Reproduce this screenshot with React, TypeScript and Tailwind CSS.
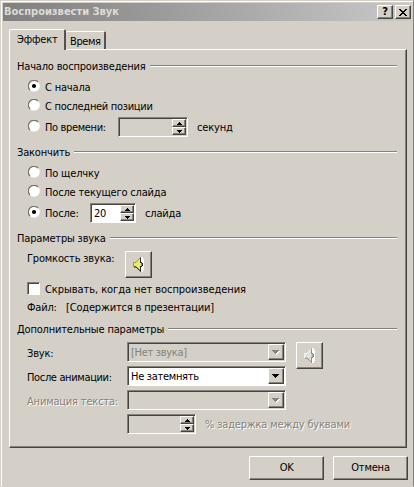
import type { ReactNode } from 'react';
import clsx from 'clsx';

const raised = 'border border-t-white border-l-white border-r-[#45443f] border-b-[#45443f] bg-[#d4d0c8] shadow-[inset_-1px_-1px_0_#85827b]';
const sunken = 'border border-t-[#85827b] border-l-[#85827b] border-r-white border-b-white shadow-[inset_1px_1px_0_#45443f]';
const disabledText = 'text-[#85827b] [text-shadow:1px_1px_0_#fff]';

function Section({ title, className, children }: { title: string; className?: string; children: ReactNode }) {
    return (
        <section className={className}>
            <div className="flex h-4 items-center gap-1">
                <h2 className="shrink-0 pt-0.5">{title}</h2>
                <div className="h-0.5 grow border-t border-t-[#85827b] bg-white" />
            </div>
            {children}
        </section>
    );
}

function Radio({ label, checked, spacing }: { label: string; checked?: boolean; spacing?: string }) {
    return (
        <label className="flex h-4 items-center gap-[5px]">
            <svg width="12" height="12" viewBox="0 0 12 12" className="mb-0.5 shrink-0">
                <circle cx="6" cy="6" r="5.8" fill="#fff" />
                <path d="M2 10A5.6 5.6 0 0 1 10 2" fill="none" stroke="#77746e" strokeWidth="1.3" />
                {checked && <circle cx="6" cy="6" r="2.1" fill="#000" />}
            </svg>
            <span className={clsx('pt-px', spacing)}>{label}</span>
        </label>
    );
}

function Arrow({ disabled }: { disabled?: boolean }) {
    return (
        <svg width="8" height="5" viewBox="0 0 8 5" shapeRendering="crispEdges">
            {disabled && <path d="M1 1h7L4.5 5z" fill="#fff" />}
            <path d="M0 0h7L3.5 4z" fill={disabled ? '#85827b' : '#000'} />
        </svg>
    );
}

function SpinButton({ up }: { up?: boolean }) {
    return (
        <div className={clsx('flex h-2 items-center justify-center', raised)}>
            <svg width="5" height="3" viewBox="0 0 5 3" shapeRendering="crispEdges">
                <path d={up ? 'M2 0h1v1h1v1h1v1H0V2h1V1h1z' : 'M0 0h5v1H4v1H3v1H2V2H1V1H0z'} />
            </svg>
        </div>
    );
}

function Spinner({ value, className }: { value?: string; className: string }) {
    return (
        <div className={clsx('flex h-5 p-px', sunken, value && 'bg-white', className)}>
            <span className="grow pl-[2px] leading-[17px]">{value}</span>
            <div className="flex w-[14px] flex-col">
                <SpinButton up />
                <SpinButton />
            </div>
        </div>
    );
}

function Select({ value, disabled }: { value?: string; disabled?: boolean }) {
    return (
        <div className={clsx('flex h-5 w-[159px] p-px', sunken, !disabled && 'bg-white')}>
            <span className={clsx('grow pl-0.5 leading-[17px] tracking-[-0.3px]', disabled && 'text-[#85827b]')}>{value}</span>
            <div className={clsx('flex w-4 items-center justify-center', raised)}>
                <Arrow disabled={disabled} />
            </div>
        </div>
    );
}

function SoundButton({ disabled }: { disabled?: boolean }) {
    const line = disabled ? '#85827b' : '#222';
    return (
        <button className={clsx('flex size-[27px] items-center justify-center', raised)}>
            <svg width="14" height="17" viewBox="0 0 14 17">
                <path d="M8.5 1h2l1.5 3v9l-1.5 3h-2z" fill="#fff" />
                <path d="M1.5 6.5H4l4.5-5v14l-4.5-5H1.5z" fill={disabled ? '#e4e2dc' : '#eeea62'} stroke={disabled ? '#fff' : '#8a8738'} strokeWidth="0.8" />
                <path d="M2 11h2l5 4.5" fill="none" stroke={line} />
                <path d="M8.5 1.5v14" fill="none" stroke={line} strokeWidth="0.9" />
                <path d="M8.5 6h1.5v1h1v3h-1v1H8.5z" fill={line} />
                <path d="M8 7h1.5v3H8z" fill={disabled ? '#d4d0c8' : '#eeea62'} />
            </svg>
        </button>
    );
}

export default function App() {
    return (
        <div className="flex h-[487px] w-[414px] flex-col border border-[#d4d0c8] border-r-[#85827b] bg-[#d4d0c8] font-['DejaVu_Sans_Condensed','DejaVu_Sans',sans-serif] text-[11px] leading-4 tracking-[-0.18px] whitespace-nowrap text-black shadow-[inset_1px_1px_0_#fff]">
            <header className="mt-0.5 ml-0.5 flex h-[18px] w-[408px] items-center bg-linear-to-r from-[#808080] to-[#c8c8c8] pl-px">
                <h1 className="grow font-bold tracking-[0px] text-[#dedbd4]">Воспроизвести Звук</h1>
                <div className="flex gap-0.5">
                    <button className={clsx('flex h-[14px] w-4 items-center justify-center text-[11px] font-bold', raised)}>?</button>
                    <button className={clsx('flex h-[14px] w-4 items-center justify-center', raised)}>
                        <svg width="8" height="7" viewBox="0 0 8 7" shapeRendering="crispEdges">
                            <path d="M0 0h2v1h1v1h2V1h1V0h2v1H7v1H6v1H5v1h1v1h1v1h1v1H6V6H5V5H3v1H2v1H0V6h1V5h1V4h1V3H2V2H1V1H0z" />
                        </svg>
                    </button>
                </div>
            </header>

            <nav className="mt-2 ml-2 flex h-5 items-end">
                <div className="z-10 -mb-px h-[21px] w-[57px] rounded-t-xs border-t border-r-2 border-l border-t-white border-r-[#55534e] border-l-white bg-[#d4d0c8] pl-[7px] leading-[19px]">Эффект</div>
                <div className="h-[18px] w-[40px] rounded-t-xs border-t border-r-2 border-t-white border-r-[#55534e] pl-1 leading-[19px] tracking-[-0.4px]">Время</div>
            </nav>

            <main className="ml-2 h-[399px] w-[398px] border border-t-white border-l-white border-r-[#45443f] border-b-[#45443f] pt-2 pr-[9px] pl-[7px] shadow-[inset_-1px_-1px_0_#85827b]">
                <Section title="Начало воспроизведения" className="h-[86px]">
                    <div className="flex flex-col pt-[5px] pl-[11px]">
                        <div className="h-[19px]"><Radio label="С начала" checked /></div>
                        <div className="h-[19px]"><Radio label="С последней позиции" spacing="tracking-[-0.3px]" /></div>
                        <div className="flex h-5 items-center">
                            <div className="w-[90px]"><Radio label="По времени:" spacing="tracking-[-0.35px]" /></div>
                            <Spinner className="w-[70px]" />
                            <span className="ml-[9px] pt-px">секунд</span>
                        </div>
                    </div>
                </Section>

                <Section title="Закончить" className="h-[86px]">
                    <div className="flex flex-col pt-[5px] pl-[11px]">
                        <div className="h-[19px]"><Radio label="По щелчку" /></div>
                        <div className="h-[19px]"><Radio label="После текущего слайда" /></div>
                        <div className="flex h-5 items-center">
                            <div className="w-[62px]"><Radio label="После:" checked /></div>
                            <Spinner value="20" className="w-[46px]" />
                            <span className="ml-[9px] pt-px">слайда</span>
                        </div>
                    </div>
                </Section>

                <Section title="Параметры звука" className="h-[91px]">
                    <div className="flex pt-[5px] pl-[10px]">
                        <span className="w-[98px]">Громкость звука:</span>
                        <SoundButton />
                    </div>
                    <label className="mt-0.5 flex h-4 items-center gap-[5px] pl-[10px]">
                        <span className={clsx('size-[13px] bg-white', sunken)} />
                        <span className="pt-[3px] tracking-[-0.06px]">Скрывать, когда нет воспроизведения</span>
                    </label>
                    <div className="mt-1 flex pl-[10px]">
                        <span className="w-[39px]">Файл:</span>
                        <span>[Содержится в презентации]</span>
                    </div>
                </Section>

                <Section title="Дополнительные параметры">
                    <div className="flex pt-[5px] pl-[10px]">
                        <div className="grid grid-cols-[100px_159px] gap-y-1">
                            <span className="pt-1">Звук:</span>
                            <Select value="[Нет звука]" disabled />
                            <span className="pt-1 tracking-[-0.35px]">После анимации:</span>
                            <Select value="Не затемнять" />
                            <span className={clsx('pt-1', disabledText)}>Анимация текста:</span>
                            <Select disabled />
                            <div />
                            <div className="flex items-center">
                                <Spinner className="w-[69px] shrink-0" />
                                <span className={clsx('ml-[9px] pt-0.5', disabledText)}>% задержка между буквами</span>
                            </div>
                        </div>
                        <div className="ml-[10px]"><SoundButton disabled /></div>
                    </div>
                </Section>
            </main>

            <footer className="mt-2 flex justify-end gap-[9px] pr-[5px]">
                <button className={clsx('h-6 w-[75px] tracking-[-0.5px]', raised)}>OK</button>
                <button className={clsx('h-6 w-[75px]', raised)}>Отмена</button>
            </footer>
        </div>
    );
}
